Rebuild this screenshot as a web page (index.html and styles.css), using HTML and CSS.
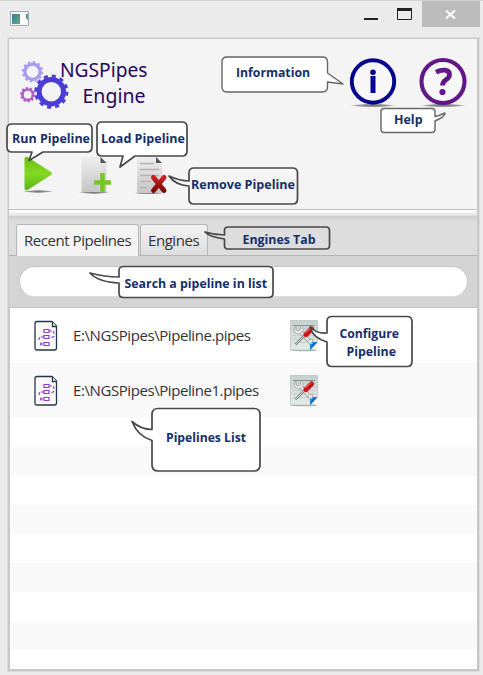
FILE: index.html
```html
<!DOCTYPE html>
<html lang="en">
<head>
<meta charset="utf-8">
<title>NGSPipes Engine</title>
<link rel="stylesheet" href="styles.css">
</head>
<body>
<svg class="defs" width="0" height="0" aria-hidden="true">
  <defs>
    <linearGradient id="green" x2="0" y2="1"><stop stop-color="#69bd12"/><stop offset=".5" stop-color="#86d922"/><stop offset="1" stop-color="#58b61a"/></linearGradient>
    <linearGradient id="paper" x2="0" y2="1"><stop stop-color="#eeeeee"/><stop offset="1" stop-color="#c5c5c5"/></linearGradient>
    <linearGradient id="note" x2="0" y2="1"><stop stop-color="#c5d1ce"/><stop offset="1" stop-color="#e2ebe8"/></linearGradient>
    <linearGradient id="red" x2="0" y2="1"><stop stop-color="#c82020"/><stop offset="1" stop-color="#780b0b"/></linearGradient>
    <linearGradient id="app" x2="1" y2="1"><stop stop-color="#4272a0"/><stop offset="1" stop-color="#58b77b"/></linearGradient>
    <radialGradient id="shade"><stop stop-color="#777"/><stop offset=".65" stop-color="#999"/><stop offset="1" stop-color="#ccc" stop-opacity="0"/></radialGradient>
    <symbol id="pipe" viewBox="0 0 24 32">
      <path d="M3 1.500H18L22.500 6V28q0 2-2 2H3q-2 0-2-2V3.500q0-2 2-2Z" fill="#fafafa" stroke="#24364d" stroke-width="1.300"/>
      <path d="M3 15 14 4M3 21 20 4M5 26 21 10M10 28 21 17" stroke="#ececec" stroke-width=".8"/>
      <path d="M18.500 2v4.500H22.500" fill="#fff" stroke="#24364d" stroke-width="1.300"/>
      <path d="M10 9.500h5v3h-5zM10 15.500h5v3h-5zM10 22.500h5v3h-5z" fill="#fff" stroke="#8a3fc8" stroke-width="1.200"/>
      <path d="M10 22.500h5M15 11h3q2 0 2 3M20 16q-1 2-3 1M10 17H7q-2 0-2 3M6 24h3M7 22.500v3" fill="none" stroke="#8a3fc8" stroke-width="1.200" stroke-dasharray="3 1"/>
    </symbol>
    <symbol id="config" viewBox="0 0 28 32">
      <ellipse cx="14" cy="30.300" rx="13" ry="1" fill="#aaa"/>
      <path d="M.5.5h27v22l-7.500 7.500H.5Z" fill="url(#note)" stroke="#b4bfbd" stroke-width=".7"/>
      <path d="M3 8.500h22M3 12h22M3 15.500h22M3 19h22M3 22.500h18" stroke="#bdc8c6" stroke-width=".7"/>
      <path d="M3 5.500h22" stroke="#84918e"/>
      <path d="M9 10 20 22" stroke="#8f8f8f" stroke-width="3.800"/>
      <path d="M9 10 20 22" stroke="#ededed" stroke-width="2.400"/>
      <path d="M6 6v4l3 1 2-2-1-4q4 2 3 6l-4 3q-4 0-5-4ZM18 22q1-4 5-2l-1 3 2 2q-4 2-6-3Z" fill="#eee" stroke="#999" stroke-width=".7"/>
      <path d="m5.500 24.500 10-10" stroke="#777" stroke-width="2.200"/>
      <path d="m5.500 24.500 10-10" stroke="#eee" stroke-width=".8"/>
      <path d="m16 14.500 5.500-5.500" stroke="#c9161d" stroke-width="5.200" stroke-linecap="round"/>
      <path d="m15 13 6-5.500" stroke="#f0524f" stroke-width="1.300"/>
      <path d="M20 22h7.500L20 30Z" fill="#158fd9"/><path d="m20 22 3 1 4.500-1-7 2Z" fill="#d9f1ff"/><path d="m20 30 3-7 4-1Z" fill="#1267bd"/>
    </symbol>
  </defs>
</svg>
<div class="window">
  <header class="titlebar">
    <svg class="app-icon" viewBox="0 0 19 15" width="19" height="15">
      <path d="M.5.5h18v14H.5z" fill="#f4f4f4" stroke="#a3abb0"/><path d="M2 3h8v10H2z" fill="url(#app)"/>
      <path d="M11 3h4v4h-4zM11 8h6v5h-6z" fill="#fff"/><path d="M16 3h2v6l-2-2z" fill="#4c9b8b"/>
    </svg>
    <div class="controls">
      <svg class="minimize" width="14" height="12"><path d="M0 11h14" stroke="#242122" stroke-width="2"/></svg>
      <svg class="maximize" width="15" height="12"><path d="M.5.5h14v11H.5z" fill="none" stroke="#242122"/><path d="M0 1.500h15" stroke="#242122" stroke-width="3"/></svg>
      <div class="close"><svg width="11" height="9"><path d="m1 .5 9 8m0-8-9 8" stroke="#fff" stroke-width="2.200"/></svg></div>
    </div>
  </header>
  <main class="frame">
    <section class="header">
      <div class="brand-row">
        <svg class="logo" width="140" height="58" viewBox="0 0 140 58">
          <circle cx="13.500" cy="12.700" r="7.600" fill="none" stroke="#a79cf2" stroke-width="3.300"/>
          <circle cx="13.500" cy="12.700" r="9.700" fill="none" stroke="#a79cf2" stroke-width="2" stroke-dasharray="2.540 2.540"/>
          <circle cx="8.700" cy="35.700" r="5.200" fill="none" stroke="#b35bc9" stroke-width="2.600"/>
          <circle cx="8.700" cy="35.700" r="6.800" fill="none" stroke="#b35bc9" stroke-width="1.800" stroke-dasharray="2.136 2.136"/>
          <circle cx="32.300" cy="32.700" r="12.200" fill="none" stroke="#4c3bd5" stroke-width="5"/>
          <circle cx="32.300" cy="32.700" r="15.700" fill="none" stroke="#4c3bd5" stroke-width="2.800" stroke-dasharray="4.110 4.110"/>
          <text class="brand" x="41" y="18" textLength="87.500" lengthAdjust="spacingAndGlyphs">NGSPipes</text>
          <text class="brand" x="63.500" y="44" textLength="63" lengthAdjust="spacingAndGlyphs">Engine</text>
        </svg>
        <div class="help-buttons">
          <svg width="48" height="50" viewBox="0 0 48 50"><ellipse cx="24" cy="46.500" rx="24" ry="1.700" fill="url(#shade)"/><circle cx="24" cy="22.500" r="21.200" fill="#f7f7f7" stroke="#04048c" stroke-width="3.900"/><circle cx="24" cy="13.200" r="2.800" fill="#04048c"/><path d="M24 17v17" stroke="#04048c" stroke-width="5"/></svg>
          <svg width="48" height="50" viewBox="0 0 48 50"><ellipse cx="24" cy="46.500" rx="24" ry="1.700" fill="url(#shade)"/><circle cx="24" cy="22.500" r="21.500" fill="#f7f7f7" stroke="#621788" stroke-width="4.100"/><path d="M17 13.200q5-2.500 9-2 4.500.6 4.500 4.300 0 3-3.500 5.300-3.500 2.300-3.500 5.700" fill="none" stroke="#621788" stroke-width="4.800"/><circle cx="23.500" cy="33" r="3.100" fill="#621788"/></svg>
        </div>
      </div>
      <div class="toolbar">
        <svg width="34" height="42" viewBox="0 0 34 42"><ellipse cx="16" cy="38.500" rx="16" ry="1.500" fill="url(#shade)"/><path d="M2.500 6q0-3 3-2l23.500 15q2 1.500 0 3L5.500 37q-3 1-3-2Z" fill="url(#green)"/></svg>
        <svg width="34" height="42" viewBox="0 0 34 42"><ellipse cx="17" cy="39.500" rx="16" ry="1.500" fill="url(#shade)"/><path d="M4.500 4h19l6 6v29h-25Z" fill="url(#paper)"/><path d="M23.500 4v6h6Z" fill="#555"/><path d="M25.500 20v19M17 29.500h17" stroke="#75c821" stroke-width="4.500"/></svg>
        <svg width="36" height="42" viewBox="0 0 36 42"><ellipse cx="17" cy="40" rx="16" ry="1.500" fill="url(#shade)"/><path d="M5 4h19l6 6v30H5Z" fill="url(#paper)"/><path d="M24 4v6h6Z" fill="#555"/><path d="M8 10.500h14M8 16.500h19M8 22.500h19M8 28.500h11M8 34.500h7" stroke="#b4b4b4" stroke-width="1.300"/><path d="m21.500 24.500 10.500 13m0-13-10.500 13" stroke="url(#red)" stroke-width="5" stroke-linecap="round"/></svg>
      </div>
    </section>
    <div class="divider"></div>
    <nav class="tabs">
      <div class="tab active">Recent Pipelines</div><div class="tab">Engines</div>
    </nav>
    <div class="search-area"><div class="search"></div></div>
    <section class="list">
      <div class="item"><svg width="24" height="32"><use href="#pipe"/></svg><span class="path">E:\NGSPipes\Pipeline.pipes</span><svg width="28" height="32"><use href="#config"/></svg></div>
      <div class="item alternate"><svg width="24" height="32"><use href="#pipe"/></svg><span class="path">E:\NGSPipes\Pipeline1.pipes</span><svg width="28" height="32"><use href="#config"/></svg></div>
      <div class="empty-rows"></div>
    </section>
  </main>
  <svg class="callouts" width="483" height="675" viewBox="0 0 483 675">
    <path class="bubble light" d="M227 57h95.500q5 0 5 5v11L343 84l-15.500-2v5q0 5-5 5H227q-5 0-5-5V62q0-5 5-5Z"/>
    <path class="bubble light" d="M384 108.500h48q3 0 3 3v5l4-1 6-2.500q-1 4-6 6l-4 2v8.500q0 3-3 3h-48q-3 0-3-3v-18q0-3 3-3Z"/>
    <path class="bubble" d="M12 124h75q5 0 5 5v18q0 5-5 5H43l-14 8.500 3-8.500H12q-5 0-5-5v-18q0-5 5-5Z"/>
    <path class="bubble" d="M102 122h80q5 0 5 5v24q0 5-5 5h-47l-15 11 3-11h-21q-5 0-5-5v-24q0-5 5-5Z"/>
    <path class="bubble header-fill" d="M194 168h98.500q5 0 5 5v26q0 5-5 5H194q-5 0-5-5v-13q-14-1-20-10 11 5 20 5v-8q0-5 5-5Z"/>
    <path class="bubble tab-fill" d="M228 227h98q3.500 0 3.500 3.500v15q0 3.500-3.500 3.500H228q-3.500 0-3.500-3.500V239q-15-2-19.500-7 10 3 19.500 3v-4.500q0-3.500 3.500-3.500Z"/>
    <path class="bubble" d="M124 266.500h144q5 0 5 4v23q0 4-5 4H124q-5 0-5-4V283q-21-1-29-10 15 4 29 4v-6.500q0-4 5-4Z"/>
    <path class="bubble" d="M332 316.500h75q5 0 5 5v40q0 5-5 5h-75q-5 0-5-5V342q-14-4-17-15 7 7 17 6v-11.500q0-5 5-5Z"/>
    <path class="bubble" d="M158 408.500h96q6 0 6 6V465q0 6-6 6h-96q-6 0-6-6v-24.500q-14-4-20-19 9 8 20 8v-15q0-6 6-6Z"/>
    <g class="labels">
      <text x="236" y="77" textLength="74" lengthAdjust="spacingAndGlyphs">Information</text>
      <text x="394" y="124" textLength="28.500" lengthAdjust="spacingAndGlyphs">Help</text>
      <text x="12" y="143" textLength="78" lengthAdjust="spacingAndGlyphs">Run Pipeline</text>
      <text x="101" y="143" textLength="84" lengthAdjust="spacingAndGlyphs">Load Pipeline</text>
      <text x="191" y="189" textLength="104" lengthAdjust="spacingAndGlyphs">Remove Pipeline</text>
      <text x="242.500" y="244" textLength="73" lengthAdjust="spacingAndGlyphs">Engines Tab</text>
      <text x="124.500" y="288" textLength="142.500" lengthAdjust="spacingAndGlyphs">Search a pipeline in list</text>
      <text x="339.500" y="338" textLength="59.500" lengthAdjust="spacingAndGlyphs">Configure</text>
      <text x="346.500" y="356" textLength="49.500" lengthAdjust="spacingAndGlyphs">Pipeline</text>
      <text x="166" y="442" textLength="80" lengthAdjust="spacingAndGlyphs">Pipelines List</text>
    </g>
  </svg>
</div>
</body>
</html>
```
FILE: styles.css
```css
* { box-sizing: border-box; }
body { margin: 0; background: #ebebeb; font-family: "Open Sans", "Noto Sans", sans-serif; }
svg { display: block; flex: none; }
.defs { position: absolute; }
.window { position: relative; width: 483px; height: 675px; border-top: 1px solid #d2d2d2; overflow: hidden; }
.titlebar { height: 36px; display: flex; justify-content: space-between; padding-left: 10px; padding-right: 3px; }
.app-icon { margin-top: 10px; }
.controls { display: flex; align-items: flex-start; }
.minimize { margin: 7px 19px 0 0; }
.maximize { margin: 7px 10px 0 0; }
.close { width: 58px; height: 26px; display: flex; align-items: center; justify-content: center; background: #bcbcbc; padding-right: 2px; }
.frame { width: 473px; height: 635px; margin-left: 7px; border: 1px solid #dcdcdc; display: flex; flex-direction: column; background: #c8c8c8; padding: 1px 2px 2px 1px; }
.header { height: 170px; background: #f4f4f4; }
.brand-row { display: flex; justify-content: space-between; height: 114px; padding: 20px 10.5px 0 10px; }
.logo, .help-buttons svg { overflow: visible; }
.brand { font: 20.5px "Noto Sans", sans-serif; fill: #26085f; }
.help-buttons { display: flex; gap: 21.5px; }
.toolbar { display: flex; gap: 21px; padding-left: 13px; }
.divider { height: 8px; border-top: 1px solid #bdbdbd; border-bottom: 1px solid #cfcfcf; background: linear-gradient(#fff, #e0e0e0); }
.tabs { height: 39px; flex: none; display: flex; align-items: flex-end; gap: 1px; padding-left: 7px; background: linear-gradient(#cfcfcf, #dddddd 5px); border-bottom: 1px solid #b4b4b4; }
.tab { width: 68px; height: 31px; border: 1px solid #b7b7b7; border-bottom: 0; border-radius: 3px 3px 0 0; background: linear-gradient(#f2f2f2, #dddddd); padding: 0 7px; font-size: 15px; line-height: 31px; letter-spacing: -.45px; color: #333; white-space: nowrap; }
.active { width: 123px; background: #f4f4f4; margin-bottom: -1px; height: 32px; }
.search-area { height: 52px; flex: none; background: #d4d4d4; border-bottom: 1px solid #c4c4c4; padding: 10px 9px 11px 10px; }
.search { height: 31px; border: 1px solid #c8c8c8; border-bottom-color: #dedede; border-radius: 16px; background: linear-gradient(#f7f7f7, #fff 3px); }
.list { flex: 1; margin-left: 1px; background: #fff; display: flex; flex-direction: column; }
.item { display: flex; align-items: center; height: 55px; flex: none; padding-left: 24px; }
.alternate { background: #f9f9f9; }
.path { width: 217px; margin-left: 15px; padding-bottom: 2px; font-size: 15px; letter-spacing: -.42px; color: #333; white-space: nowrap; }
.empty-rows { flex: 1; background: repeating-linear-gradient(#fff 0 29px, #f9f9f9 29px 58px); }
.callouts { position: absolute; left: 0; top: -1px; }
.bubble { fill: #fff; stroke: #484848; stroke-width: 1.7; stroke-linejoin: round; }
.light { stroke: #666; stroke-width: 1.4; }
.header-fill { fill: #f5f5f5; }
.tab-fill { fill: #dddddd; }
.labels { font: 700 13.2px "Open Sans", "Noto Sans", sans-serif; fill: #142f6b; }
```
